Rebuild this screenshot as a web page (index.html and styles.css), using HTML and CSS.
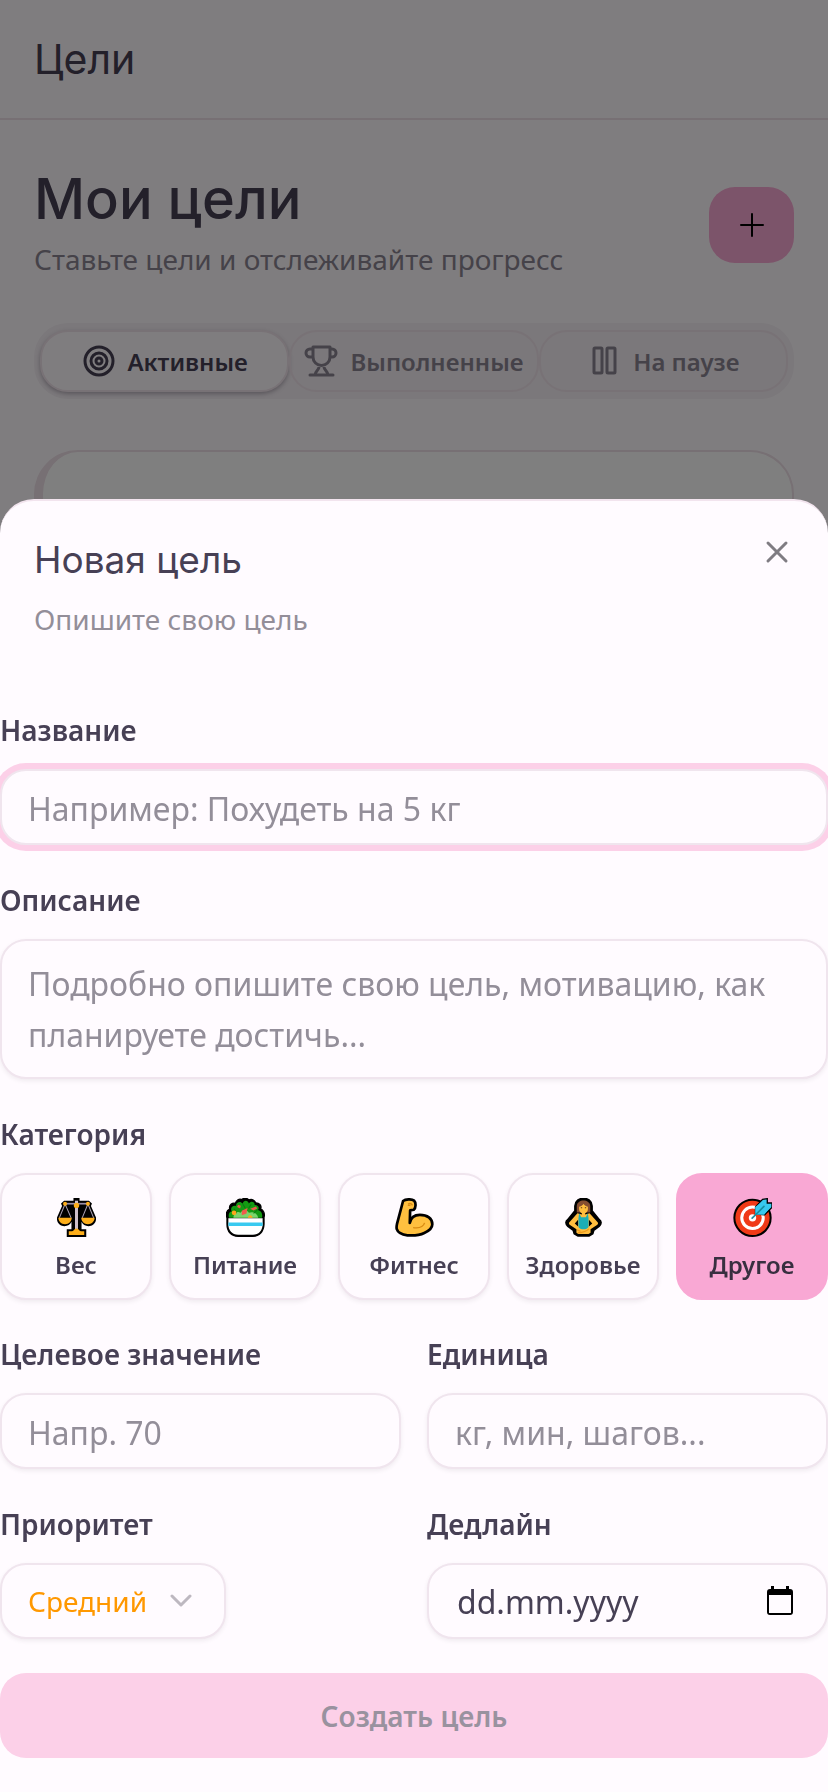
FILE: index.html
```
<!DOCTYPE html>
<html lang="ru">
<head>
    <meta charset="UTF-8">
    <meta name="viewport" content="width=device-width, initial-scale=1.0">
    <title>Цели</title>
    <link rel="stylesheet" href="styles.css">
</head>
<body>
    <header class="topbar">
        <p class="topbar-title">Цели</p>
    </header>

    <main class="page">
        <div class="page-head">
            <div>
                <h1>Мои цели</h1>
                <p class="page-sub">Ставьте цели и отслеживайте прогресс</p>
            </div>
            <button type="button" class="btn-add" aria-label="Добавить цель">
                <svg width="28" height="28" viewBox="0 0 28 28" fill="none" stroke="#000" stroke-width="2" stroke-linecap="round"><path d="M14 3v22M3 14h22"/></svg>
            </button>
        </div>

        <div class="tabs">
            <button type="button" class="tab active">
                <svg width="34" height="34" viewBox="0 0 34 34" fill="none" stroke="currentColor" stroke-width="3"><circle cx="17" cy="17" r="14"/><circle cx="17" cy="17" r="8"/><circle cx="17" cy="17" r="3"/></svg>
                Активные
            </button>
            <button type="button" class="tab">
                <svg width="34" height="34" viewBox="0 0 34 34" fill="none" stroke="currentColor" stroke-width="3" stroke-linejoin="round" stroke-linecap="round"><path d="M9 3h17v10a8 8 0 0 1-17 0zM9 5H6a4 4 0 0 0-4 4a4 4 0 0 0 4 4h3M26 5h2a4 4 0 0 1 4 4a4 4 0 0 1-4 4h-2M15 21v2c0 3-4 4-4 8M20 21v2c0 3 4 4 4 8M6 31h23"/></svg>
                Выполненные
            </button>
            <button type="button" class="tab">
                <svg width="34" height="34" viewBox="0 0 34 34" fill="none" stroke="currentColor" stroke-width="3"><rect x="7" y="4" width="8" height="25" rx="1"/><rect x="20" y="4" width="8" height="25" rx="1"/></svg>
                На паузе
            </button>
        </div>

        <div class="goal-card"></div>
    </main>

    <div class="overlay"></div>

    <section class="sheet" role="dialog" aria-labelledby="sheetTitle">
        <div class="sheet-head">
            <div>
                <h2 id="sheetTitle">Новая цель</h2>
                <p>Опишите свою цель</p>
            </div>
            <button type="button" class="btn-close" aria-label="Закрыть">
                <svg width="24" height="24" viewBox="0 0 24 24" fill="none" stroke="currentColor" stroke-width="3" stroke-linecap="round"><path d="M3 3l18 18M21 3L3 21"/></svg>
            </button>
        </div>

        <form class="goal-form">
            <div class="field">
                <label for="title">Название</label>
                <input type="text" id="title" class="control is-focused" placeholder="Например: Похудеть на 5 кг">
            </div>

            <div class="field">
                <label for="desc">Описание</label>
                <textarea id="desc" class="control" placeholder="Подробно опишите свою цель, мотивацию, как планируете достичь..."></textarea>
            </div>

            <div class="field" role="group" aria-labelledby="catLabel">
                <span class="label" id="catLabel">Категория</span>
                <div class="categories">
                    <button type="button" class="category">
                        <svg viewBox="0 0 116 116">
                            <path d="M49 0h18v8h28l9 8-3 8 15 34c2 16-10 26-22 26-10 0-18-5-21-13v22h14v23H29V93h14V71c-3 8-11 13-21 13C10 84-2 74 0 58l15-34-3-8 9-8h28z"/>
                            <path d="M24 18L7 59m17-41l18 41M92 18L75 59m17-41l17 41" stroke="#aaa0b4" stroke-width="3"/>
                            <path d="M24 17h68" stroke="#9b8fa8" stroke-width="5"/>
                            <path d="M58 8v88" stroke="#cdbfca" stroke-width="9"/>
                            <path d="M4 59h40c-1 12-9 19-20 19S5 71 4 59zM72 59h40c-1 12-9 19-20 19s-19-7-20-19zM35 99h10c5-1 7-8 13-8s8 7 13 8h10v11H35z" fill="#fdae1b"/>
                            <circle cx="58" cy="22" r="8" fill="#fdae1b"/><circle cx="24" cy="17" r="6" fill="#fdae1b"/><circle cx="92" cy="17" r="6" fill="#fdae1b"/>
                        </svg>
                        Вес
                    </button>
                    <button type="button" class="category">
                        <svg viewBox="0 0 116 116">
                            <path d="M3 60C0 48 2 36 11 33c-3-12 8-20 17-17 2-10 12-15 19-11 5-6 17-5 21 1 9-4 19 1 20 9 10-1 19 7 15 17 9 4 13 15 10 26v20c-1 22-14 36-33 36H36C16 114 3 100 3 78z" stroke="#000" stroke-width="4"/>
                            <path d="M9 59c-3-9 0-19 8-19-6-11 4-20 13-16-1-12 14-16 19-7 4-12 16-11 19-1 6-9 19-5 17 5 9-1 16 7 10 15 10 2 15 13 12 23z" fill="#139b12"/>
                            <path d="M22 59c2-17 14-20 21-15 7-12 21-9 25 0 12-5 25 0 28 15z" fill="#7bd46d"/>
                            <path d="M36 20l8 3-2 8-9-4zM47 38l17-8-3 16-14 5zM72 32l17-7 4 6-11 6z" fill="#ef5a4b"/>
                            <path d="M32 45l-8-13M57 30l-8-14M67 31l8-12M82 46l13-12" stroke="#0b7c10" stroke-width="3"/>
                            <circle cx="24" cy="44" r="7" fill="#fda51b"/><path d="M65 59c1-10 13-10 14 0z" fill="#fda51b"/>
                            <path d="M7 60h102v18c-1 20-12 31-29 31H36C18 109 7 97 7 78z" fill="#fff"/>
                            <path d="M7 73h102v10H7z" fill="#38caf0"/>
                        </svg>
                        Питание
                    </button>
                    <button type="button" class="category">
                        <svg viewBox="0 0 116 116">
                            <path d="M24 9C31 3 49 2 57 8c6 6 5 22-1 27l-11 2-1 37c3-15 14-24 30-24 22 0 37 11 37 28 0 12-10 20-24 26-16 8-34 8-50 7-17-2-29-9-32-19-1-6 0-10 1-15z" fill="#ffc03f" stroke="#000" stroke-width="8" stroke-linejoin="round"/>
                            <path d="M54 88c14 2 30-1 34-14M39 18c5-3 10-1 13 4M38 22h8" fill="none" stroke="#d98b13" stroke-width="4"/>
                        </svg>
                        Фитнес
                    </button>
                    <button type="button" class="category">
                        <svg viewBox="0 0 116 116">
                            <path d="M33 24C34-6 82-6 83 24v14l21 26c8 5 7 14 0 20L88 96l-3 10-10 6H41l-10-6-3-10-16-12c-7-6-8-15 0-20l21-26z" stroke="#000" stroke-width="6" stroke-linejoin="round"/>
                            <path d="M38 43V24C39 2 77 2 78 24v19z" fill="#854d30"/>
                            <path d="M45 26c7-2 11-5 13-9 2 4 6 7 13 9v7c0 6-3 10-8 12v4l13-4 22 25c5 4 4 8-1 11L79 93v10l-6 4H43l-6-4V93L19 81c-5-3-6-7-1-11l22-25 13 4v-4c-5-2-8-6-8-12z" fill="#ffbd3e"/>
                            <path d="M42 65L32 76l10 9zM74 65l10 11-10 9z"/>
                            <path d="M45 45l6 12h14l6-12 2 15v26c-5 9-25 9-30 0V60z" fill="#1daeb6"/>
                            <path d="M50 29h4M62 29h4" stroke="#5c3515" stroke-width="3"/>
                            <path d="M41 104c12-1 26-4 33-12M39 95l10 4" stroke="#ee9c1d" stroke-width="4" fill="none"/>
                        </svg>
                        Здоровье
                    </button>
                    <button type="button" class="category selected">
                        <svg viewBox="0 0 116 116">
                            <circle cx="58" cy="59" r="54" fill="#f03a17" stroke="#000" stroke-width="6"/>
                            <circle cx="58" cy="59" r="32" fill="none" stroke="#fff" stroke-width="9"/>
                            <circle cx="58" cy="59" r="11" fill="#fff"/>
                            <path d="M67 48V27L88 4l14-2v13h14v13L94 50z" fill="#37c9ee" stroke="#000" stroke-width="4"/>
                            <path d="M66 50V27L88 8h10v11h13v8L93 50z" fill="#37c9ee"/>
                            <path d="M57 60L92 25" stroke="#168fa0" stroke-width="5" stroke-linecap="round"/>
                        </svg>
                        Другое
                    </button>
                </div>
            </div>

            <div class="row">
                <div class="field">
                    <label for="target">Целевое значение</label>
                    <input type="text" inputmode="decimal" id="target" class="control" placeholder="Напр. 70">
                </div>
                <div class="field">
                    <label for="unit">Единица</label>
                    <input type="text" id="unit" class="control" placeholder="кг, мин, шагов...">
                </div>
            </div>

            <div class="row">
                <div class="field">
                    <label for="priority">Приоритет</label>
                    <div class="control select-box">
                        <select id="priority">
                            <option>Средний</option>
                        </select>
                        <svg width="22" height="22" viewBox="0 0 22 22" fill="none" stroke="#bdb8c0" stroke-width="3" stroke-linecap="round" stroke-linejoin="round"><path d="M2 6l9 9 9-9"/></svg>
                    </div>
                </div>
                <div class="field">
                    <label for="deadline">Дедлайн</label>
                    <div class="control date-box">
                        <input type="text" id="deadline" placeholder="dd.mm.yyyy">
                        <button type="button" class="btn-date" aria-label="Выбрать дату">
                            <svg width="32" height="32" viewBox="0 0 32 32"><path d="M26 4h-1V1h-3v3H10V1H7v3H6a3 3 0 0 0-3 3v20a3 3 0 0 0 3 3h20a3 3 0 0 0 3-3V7a3 3 0 0 0-3-3zm1 24H5V10h22z"/></svg>
                        </button>
                    </div>
                </div>
            </div>

            <button type="submit" class="btn-submit" disabled>Создать цель</button>
        </form>
    </section>
</body>
</html>
```

FILE: styles.css
```
* {
    box-sizing: border-box;
}

body {
    margin: 0;
    min-height: 100vh;
    background-color: #fffbff;
    color: #474055;
    font-family: "Noto Sans", "Open Sans", sans-serif;
    font-size: 28px;
    overflow: hidden;
}

h1, h2, p {
    margin: 0;
}

h1, h2, .topbar-title {
    font-family: "Inter", "Noto Sans", sans-serif;
}

button, input, select, textarea {
    font: inherit;
    color: inherit;
}

button {
    border: none;
    padding: 0;
    cursor: pointer;
}

svg {
    display: block;
    flex: none;
}

/* page under the sheet */
.topbar {
    padding: 34px;
    border-bottom: 2px solid #efe0e8;
}

.topbar-title {
    color: #474055;
    font-size: 41px;
    font-weight: 400;
    line-height: 50px;
}

.page {
    padding: 45px 34px 34px;
}

.page-head {
    display: flex;
    align-items: center;
    justify-content: space-between;
}

h1 {
    color: #474055;
    font-size: 56px;
    font-weight: 500;
    line-height: 68px;
}

.page-sub {
    color: #8b8592;
    line-height: 52px;
}

.btn-add {
    display: flex;
    align-items: center;
    justify-content: center;
    width: 85px;
    height: 76px;
    border-radius: 26px;
    background-color: #f9a8d4;
}

.tabs {
    display: grid;
    grid-template-columns: repeat(3, minmax(0, 1fr));
    margin-top: 38px;
    padding: 7px 6px;
    border-radius: 34px;
    background-color: #f6f0f6;
}

.tab {
    display: flex;
    align-items: center;
    justify-content: center;
    gap: 12px;
    height: 62px;
    border: 2px solid #f1e4ec;
    border-radius: 28px;
    background: none;
    color: #8b8592;
    font-size: 24px;
    font-weight: 600;
}

.tab.active {
    background-color: #fffbff;
    color: #474055;
    box-shadow: 0 2px 4px rgba(60, 50, 70, 0.35);
}

.goal-card {
    height: 300px;
    margin-top: 51px;
    border: 2px solid #efe0e8;
    border-left-width: 9px;
    border-radius: 44px;
    background-color: #fff;
}

.overlay {
    position: fixed;
    inset: 0;
    background-color: rgba(0, 0, 0, 0.5);
}

/* bottom sheet */
.sheet {
    position: fixed;
    left: 0;
    right: 0;
    bottom: 0;
    padding-bottom: 34px;
    border-top: 2px solid #f2e4ee;
    border-radius: 34px 34px 0 0;
    background-color: #fffbff;
}

.sheet-head {
    display: flex;
    justify-content: space-between;
    padding: 34px 34px 68px;
}

.sheet-head h2 {
    font-size: 37px;
    font-weight: 400;
    line-height: 50px;
}

.sheet-head p {
    margin-top: 12px;
    color: #938e99;
    line-height: 44px;
}

.btn-close {
    align-self: flex-start;
    padding: 5px;
    background: none;
    color: #7f7c82;
}

.goal-form {
    display: grid;
    gap: 34px;
}

.field {
    display: flex;
    flex-direction: column;
    gap: 18px;
}

.field label,
.label {
    font-weight: 600;
    line-height: 42px;
}

.control {
    width: 100%;
    height: 76px;
    padding: 2px 26px 0;
    border: 2px solid #f0e5ee;
    border-radius: 26px;
    outline: none;
    background-color: #fffbff;
    box-shadow: 0 2px 4px rgba(60, 50, 70, 0.08);
    font-size: 32px;
}

.control.is-focused {
    box-shadow: 0 0 0 6px #fcd0e8;
}

textarea.control {
    display: block;
    height: 140px;
    padding: 17px 26px;
    line-height: 51px;
    resize: none;
    overflow: hidden;
}

::placeholder {
    color: #938e99;
    opacity: 1;
}

.categories {
    display: grid;
    grid-template-columns: repeat(5, minmax(0, 1fr));
    gap: 17px;
}

.category {
    display: flex;
    flex-direction: column;
    align-items: center;
    gap: 10px;
    height: 127px;
    margin-bottom: -1px;
    padding-top: 23px;
    border: 2px solid #f0e5ee;
    border-radius: 26px;
    background-color: #fffbff;
    box-shadow: 0 2px 4px rgba(60, 50, 70, 0.08);
    font-size: 24px;
    font-weight: 600;
    line-height: 36px;
}

.category svg {
    width: 39px;
    height: 39px;
}

.category.selected {
    border-color: #f9a8d4;
    background-color: #f9a8d4;
    box-shadow: none;
    color: #382f40;
}

.row {
    display: grid;
    grid-template-columns: repeat(2, minmax(0, 1fr));
    gap: 26px;
}

.select-box {
    display: flex;
    align-items: center;
    align-self: flex-start;
    width: auto;
    padding: 0 32px 0 26px;
    gap: 22px;
}

.select-box select {
    appearance: none;
    border: none;
    padding: 0;
    outline: none;
    background: none;
    color: #ff9800;
    font-size: 28px;
}

.date-box {
    display: flex;
    align-items: center;
    padding: 0 30px 0 28px;
}

.date-box input {
    flex: 1;
    min-width: 0;
    padding: 0;
    border: none;
    outline: none;
    background: none;
}

.date-box ::placeholder {
    color: #474055;
}

.btn-date {
    background: none;
}

.btn-submit {
    height: 85px;
    border-radius: 26px;
    background-color: #fcd0e8;
    color: #99929f;
    font-weight: 600;
}
```
